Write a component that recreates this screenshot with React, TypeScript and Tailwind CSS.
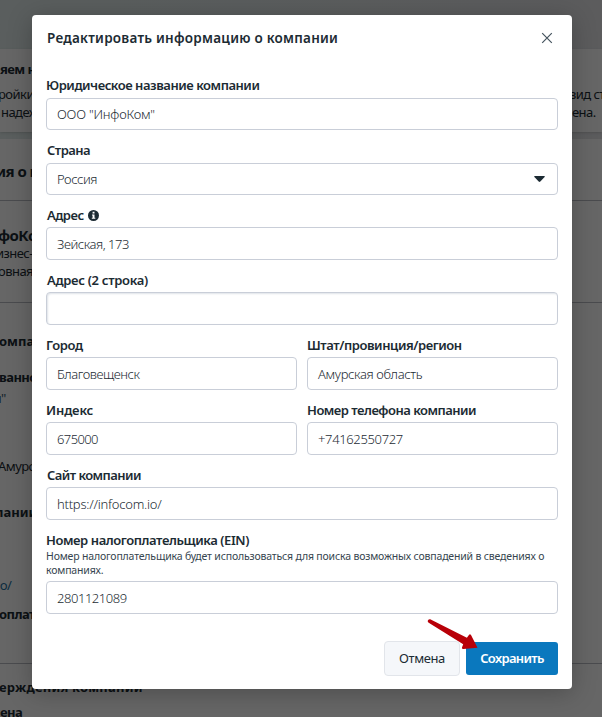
import React from "react";

function Input({
  value,
  size = "h-[33px]",
  tracking = "tracking-[-0.35px]",
  className = "",
}: {
  value: string;
  size?: string;
  tracking?: string;
  className?: string;
}) {
  return (
    <div
      className={`flex items-center rounded-[4px] border border-[#c9ced8] bg-white px-[10px] pt-[2px] text-[13px] font-light text-[#1c2b33] ${size} ${tracking} ${className}`}
    >
      <span className="whitespace-nowrap">{value}</span>
    </div>
  );
}

function Label({ children, className = "" }: { children: React.ReactNode; className?: string }) {
  return (
    <div className={`flex h-[20px] items-center whitespace-nowrap text-[13px] font-semibold text-[#1c2b33] ${className}`}>
      {children}
    </div>
  );
}

function Line({ left, right, className = "" }: { left: string; right?: string; className?: string }) {
  return (
    <div className={`flex h-[18px] items-center whitespace-nowrap ${className}`}>
      <span className="w-[571px] shrink-0">{left}</span>
      <span>{right}</span>
    </div>
  );
}

function BackgroundPage() {
  return (
    <div className="h-[717px] overflow-hidden bg-linear-to-r from-[#e0ebea] to-[#e5e6e9] pt-[49px] text-[13px] tracking-[-0.55px] text-[#1c2b33]">
      <div className="h-[83px] bg-white pt-[12px] shadow-sm">
        <Line left="яем н" className="font-bold" />
        <Line left="ройки" right="вид ст" className="mt-[7px] -ml-[2px]" />
        <Line left="надеж" right="ена." className="pl-px" />
      </div>
      <div className="mt-[7px] h-[578px] bg-white">
        <div className="h-[62px] border-b border-[#b8bcc2] pt-[23px]">
          <Line left="ия о к" className="-ml-[4px] text-[15px] font-bold" />
        </div>
        <div className="h-[102px] border-b border-[#b8bcc2] pt-[24px]">
          <Line left="фоКо" className="-ml-[2px] h-[20px] text-[15px] font-bold" />
          <Line left="изнес-" className="-ml-[4px]" />
          <Line left="овная" className="-ml-[2px]" />
        </div>
        <div className="h-[361px] border-b border-[#b8bcc2] pt-[30px]">
          <Line left="омпа" className="-ml-px font-bold tracking-normal" />
          <Line left="ванно" className="mt-[18px] -ml-px font-bold" />
          <Line left={'л"'} className="mt-[3px] -ml-[6px] text-[#35586d]" />
          <Line left="Амурс" className="mt-[50px] -ml-[2px]" />
          <Line left="пании" className="mt-[28px] -ml-[5px] font-bold tracking-normal" />
          <Line left="io/" className="mt-[55px] -ml-[3px] text-[#216fa0]" />
          <Line left="оплате" className="mt-[11px] -ml-px font-bold" />
        </div>
        <Line left="ерждения компании" className="mt-[15px] -ml-px font-bold tracking-[0.2px]" />
        <Line left="ена" className="mt-[7px] font-bold" />
      </div>
    </div>
  );
}

export default function App() {
  return (
    <div className="relative h-[717px] w-[602px] overflow-hidden font-['Noto_Sans','Open_Sans',sans-serif]">
      <BackgroundPage />
      <div className="absolute inset-0 bg-black/60 px-[32px] pt-[15px]">
        <div className="h-[674px] w-[540px] rounded-[4px] bg-white px-[14px] shadow-[0_4px_24px_rgba(0,0,0,0.25)]">
          <div className="flex h-[61px] items-start justify-between pt-[13px]">
            <h1 className="flex h-[20px] items-center pl-px text-[13.5px] font-semibold tracking-[0.25px] whitespace-nowrap text-[#1c2b33]">
              Редактировать информацию о компании
            </h1>
            <svg className="mt-[4px] mr-[5px] size-[12px]" viewBox="0 0 12 12" fill="none" stroke="#45545e" strokeWidth="1.2">
              <path d="M1.2 1.2 10.8 10.8M10.8 1.2 1.2 10.8" />
            </svg>
          </div>

          <Label className="tracking-[-0.46px]">Юридическое название компании</Label>
          <Input value={'ООО "ИнфоКом"'} size="h-[32px]" tracking="tracking-[-0.2px]" className="mt-[2px]" />

          <Label className="mt-[11px] pl-px tracking-[-0.55px]">Страна</Label>
          <div className="mt-[2px] flex h-[32px] items-center justify-between rounded-[4px] border border-[#c9ced8] pt-px pr-[12px] pl-[10px] text-[13px] font-light tracking-[-0.4px] text-[#1c2b33]">
            <span>Россия</span>
            <svg className="mb-px h-[6px] w-[11px]" viewBox="0 0 11 6" fill="#1c2b33">
              <path d="M.8 0h9.4q1 0 .4.9L6.3 5.5q-.8.8-1.6 0L.4.9Q-.2 0 .8 0Z" />
            </svg>
          </div>

          <Label className="mt-[11px] pl-px tracking-[-0.5px]">
            Адрес
            <svg className="mb-[2px] ml-[4px] size-[11px]" viewBox="0 0 11 11">
              <circle cx="5.5" cy="5.5" r="5.5" fill="#1c2b33" />
              <path d="M4.6 1.8h1.9v1.6H4.6ZM4 4.5h2.5v3.2h.8v1.1H3.8V7.7h.8V5.6H4Z" fill="#fff" />
            </svg>
          </Label>
          <Input value="Зейская, 173" tracking="tracking-[-0.45px]" className="mt-px" />

          <Label className="mt-[11px] pl-px tracking-[-0.3px]">Адрес (2 строка)</Label>
          <Input value="" className="mt-px shadow-[inset_1px_1px_2px_#dfe3e8]" />

          <div className="mt-[11px] grid grid-cols-2 gap-x-[10px] gap-y-[11px]">
            <div>
              <Label className="tracking-[-0.35px]">Город</Label>
              <Input value="Благовещенск" tracking="tracking-[-0.45px]" className="mt-px" />
            </div>
            <div>
              <Label className="tracking-[-0.43px]">Штат/провинция/регион</Label>
              <Input value="Амурская область" className="mt-px" />
            </div>
            <div>
              <Label className="tracking-[-0.15px]">Индекс</Label>
              <Input value="675000" tracking="tracking-[-0.6px]" className="mt-px" />
            </div>
            <div>
              <Label className="tracking-[-0.5px]">Номер телефона компании</Label>
              <Input value="+74162550727" className="mt-px" />
            </div>
          </div>

          <Label className="mt-[11px] pl-px tracking-[-0.55px]">Сайт компании</Label>
          <Input value="https://infocom.io/" tracking="tracking-[-0.24px]" className="mt-px" />

          <Label className="mt-[11px] tracking-[-0.42px]">Номер налогоплательщика (EIN)</Label>
          <p className="-mt-[2px] text-[10.5px] leading-[14px] tracking-[-0.17px] whitespace-nowrap text-[#36454f]">
            Номер налогоплательщика будет использоваться для поиска возможных совпадений в сведениях о
            <br />
            компаниях.
          </p>
          <Input value="2801121089" tracking="tracking-[-0.45px]" className="mt-[4px]" />

          <div className="mt-[27px] flex items-center justify-end gap-[6px]">
            <button className="h-[35px] w-[76px] rounded-[4px] border border-[#e2e5ea] bg-[#f5f7fa] text-[13px] tracking-[-0.4px] whitespace-nowrap text-[#1c2b33]">
              Отмена
            </button>
            <button className="h-[33px] w-[92px] rounded-[3px] bg-[#0a78be] text-[13px] font-semibold tracking-[-0.65px] whitespace-nowrap text-white">
              Сохранить
            </button>
          </div>
        </div>
      </div>
      <svg className="absolute top-[617px] left-[425px] h-[34px] w-[54px]" viewBox="0 0 54 34" fill="#b80008">
        <path d="M5.2 2.3Q3 2 2.7 4q0 1 1 1.7L38.2 27.2l-1.3 3.5q0 1.4 1.6 1.2L52.5 30.8 46 18q-1-1.4-1.9-.2l-2.2 3Z" />
      </svg>
    </div>
  );
}
